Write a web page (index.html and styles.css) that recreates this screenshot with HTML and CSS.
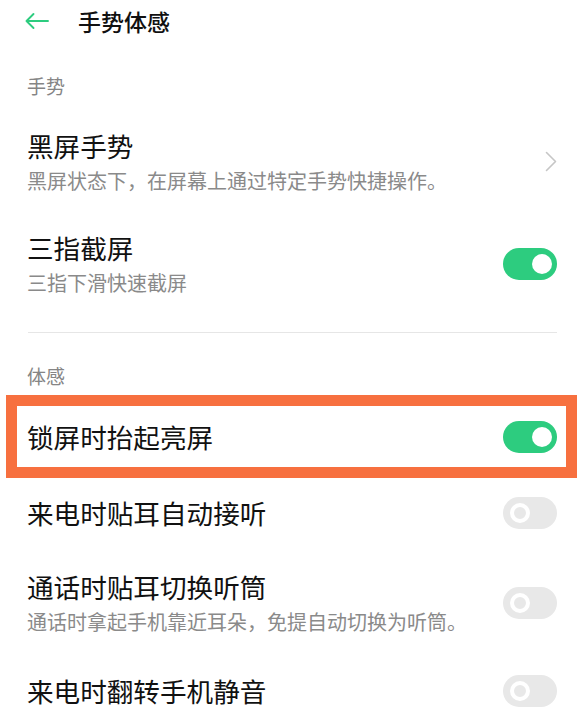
FILE: index.html
```html
<!DOCTYPE html>
<html lang="zh-CN">
<head>
<meta charset="utf-8">
<title>手势体感</title>
<link rel="stylesheet" href="styles.css">
</head>
<body>
<div class="page">
  <header class="topbar">
    <svg class="back" width="26" height="18" viewBox="0 0 26 18" aria-hidden="true">
      <path d="M24 9H2.5M9.5 2L2.5 9L9.5 16" fill="none" stroke="#2dcc7f" stroke-width="1.9" stroke-linecap="round" stroke-linejoin="round"/>
    </svg>
    <h1 class="title">手势体感</h1>
  </header>

  <div class="section-label first">手势</div>

  <div class="row two">
    <div class="text">
      <div class="row-title">黑屏手势</div>
      <div class="row-sub">黑屏状态下，在屏幕上通过特定手势快捷操作。</div>
    </div>
    <svg class="chevron" width="12" height="21" viewBox="0 0 12 21" aria-hidden="true">
      <path d="M1.5 1.5L10.5 10.5L1.5 19.5" fill="none" stroke="#c6c6c6" stroke-width="1.6" stroke-linecap="round" stroke-linejoin="round"/>
    </svg>
  </div>

  <div class="row two">
    <div class="text">
      <div class="row-title">三指截屏</div>
      <div class="row-sub">三指下滑快速截屏</div>
    </div>
    <span class="switch on"><span class="knob"></span></span>
  </div>

  <div class="divider"></div>

  <div class="section-label second">体感</div>

  <div class="row one highlight">
    <div class="text">
      <div class="row-title">锁屏时抬起亮屏</div>
    </div>
    <span class="switch on"><span class="knob"></span></span>
  </div>

  <div class="row one">
    <div class="text">
      <div class="row-title">来电时贴耳自动接听</div>
    </div>
    <span class="switch off"><span class="knob"></span></span>
  </div>

  <div class="row two">
    <div class="text">
      <div class="row-title">通话时贴耳切换听筒</div>
      <div class="row-sub">通话时拿起手机靠近耳朵，免提自动切换为听筒。</div>
    </div>
    <span class="switch off"><span class="knob"></span></span>
  </div>

  <div class="row one">
    <div class="text">
      <div class="row-title">来电时翻转手机静音</div>
    </div>
    <span class="switch off"><span class="knob"></span></span>
  </div>
</div>
</body>
</html>
```

FILE: styles.css
```css
html, body {
  margin: 0;
  padding: 0;
  background: #ffffff;
}

body {
  font-family: "Noto Sans CJK SC", "Noto Sans", sans-serif;
  color: #111111;
  overflow: hidden;
}

.page {
  width: 586px;
  height: 718px;
  overflow: hidden;
}

.topbar {
  height: 42px;
  display: flex;
  align-items: center;
  padding-left: 24px;
}

.back {
  display: block;
}

.title {
  margin: 0 0 0 28px;
  font-size: 23px;
  line-height: 30px;
  font-weight: 500;
  color: #111111;
}

.section-label {
  font-size: 19px;
  line-height: 26px;
  color: #858585;
  padding-left: 27px;
}

.section-label.first {
  margin-top: 31px;
  margin-bottom: 11px;
}

.section-label.second {
  margin-top: 30px;
  margin-bottom: 10px;
}

.row {
  position: relative;
  display: flex;
  align-items: center;
  justify-content: space-between;
  padding: 0 29px 0 27px;
  box-sizing: border-box;
}

.row.two {
  height: 102px;
  padding-top: 1px;
}

.row.one {
  height: 76px;
}

.row-title {
  font-size: 26.6px;
  line-height: 34px;
  color: #111111;
}

.row-sub {
  margin-top: 5px;
  font-size: 20px;
  line-height: 26px;
  color: #8a8a8a;
}

.chevron {
  display: block;
}

.switch {
  position: relative;
  flex: none;
  width: 54px;
  height: 32px;
  border-radius: 16px;
  display: flex;
  align-items: center;
  box-sizing: border-box;
}

.switch.on {
  background: #2dcc7f;
  justify-content: flex-end;
  padding-right: 5px;
}

.switch.off {
  background: #e8e8e8;
  justify-content: flex-start;
  padding-left: 7px;
}

.switch .knob {
  width: 20px;
  height: 20px;
  border-radius: 50%;
  box-sizing: border-box;
}

.switch.on .knob {
  background: #ffffff;
}

.switch.off .knob {
  border: 4px solid #ffffff;
  background: #e8e8e8;
}

.divider {
  height: 1px;
  background: #e6e6e6;
  margin: 18px 29px 0 28px;
}

.row.highlight::after {
  content: "";
  position: absolute;
  left: 6px;
  right: 9px;
  top: -4px;
  bottom: -3px;
  border: 11px solid #f7703f;
  pointer-events: none;
}
```
